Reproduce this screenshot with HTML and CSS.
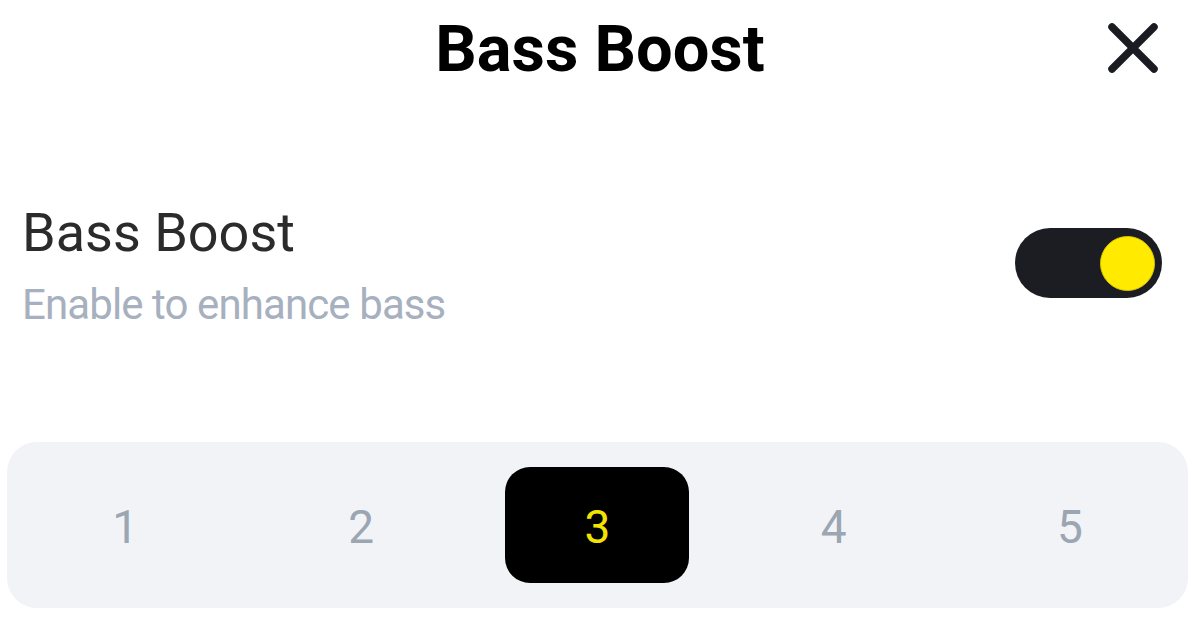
FILE: index.html
```html
<!DOCTYPE html>
<html lang="en">
<head>
<meta charset="utf-8">
<title>Bass Boost</title>
<link rel="stylesheet" href="styles.css">
</head>
<body>
<div class="page">
  <header class="header">
    <div class="spacer"></div>
    <h1 class="title">Bass Boost</h1>
    <button class="close" aria-label="Close">
      <svg width="52" height="52" viewBox="0 0 52 52">
        <path d="M5 5 L47 47 M47 5 L5 47" stroke="#1b1c21" stroke-width="7.5" stroke-linecap="round" fill="none"/>
      </svg>
    </button>
  </header>

  <section class="setting">
    <div class="setting-text">
      <div class="setting-label">Bass Boost</div>
      <div class="setting-desc">Enable to enhance bass</div>
    </div>
    <div class="toggle on"><span class="knob"></span></div>
  </section>

  <div class="levels">
    <div class="level"><span class="num">1</span></div>
    <div class="level"><span class="num">2</span></div>
    <div class="level"><span class="pill"><span class="num">3</span></span></div>
    <div class="level"><span class="num">4</span></div>
    <div class="level"><span class="num">5</span></div>
  </div>
</div>
</body>
</html>
```

FILE: styles.css
```css
html, body {
  margin: 0;
  padding: 0;
  background: #ffffff;
}

body {
  font-family: Roboto, "Noto Sans", "Liberation Sans", sans-serif;
}

.page {
  width: 1200px;
  height: 617px;
  overflow: hidden;
}

.header {
  display: grid;
  grid-template-columns: 1fr auto 1fr;
  align-items: center;
  padding: 9px 41px 0 41px;
  height: 80px;
}

.title {
  margin: 0;
  font-size: 65px;
  line-height: 80px;
  font-weight: 700;
  color: #000000;
}

.close {
  justify-self: end;
  border: 0;
  padding: 0;
  background: transparent;
  width: 52px;
  height: 52px;
  display: flex;
  margin-top: -2px;
}

.setting {
  display: flex;
  justify-content: space-between;
  align-items: flex-start;
  padding: 113px 38px 0 22px;
}

.setting-label {
  font-size: 54px;
  line-height: 62px;
  color: #2b2b2b;
}

.setting-desc {
  margin-top: 16px;
  font-size: 42px;
  line-height: 50px;
  letter-spacing: -0.9px;
  color: #a7b0be;
}

.toggle {
  margin-top: 26px;
  width: 147px;
  height: 70px;
  border-radius: 35px;
  background: #1c1d23;
  display: flex;
  align-items: center;
  justify-content: flex-end;
  padding-right: 7px;
  box-sizing: border-box;
}

.knob {
  width: 55px;
  height: 55px;
  border-radius: 50%;
  background: #ffea00;
  box-sizing: border-box;
  border: 1px solid #d9c700;
}

.levels {
  margin: 112px 12px 0 7px;
  height: 166px;
  border-radius: 30px;
  background: #f2f3f7;
  display: grid;
  grid-template-columns: repeat(5, 1fr);
  align-items: center;
  padding: 25px 0;
  box-sizing: border-box;
}

.level {
  display: flex;
  justify-content: center;
  align-items: center;
  height: 116px;
  font-size: 46px;
  color: #9ba6b2;
}

.num {
  padding-top: 4px;
}

.pill {
  width: 184px;
  height: 116px;
  border-radius: 25px;
  background: #000000;
  color: #f3e300;
  display: flex;
  justify-content: center;
  align-items: center;
}
```
